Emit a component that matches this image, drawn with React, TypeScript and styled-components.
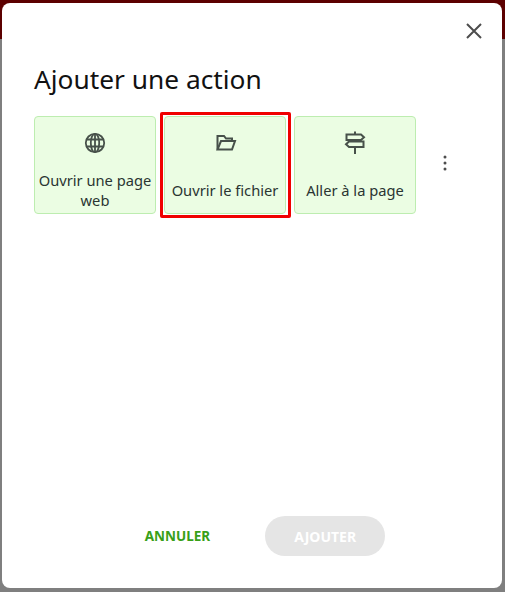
import React from "react";
import styled, { createGlobalStyle } from "styled-components";

const Global = createGlobalStyle`
  html, body { margin: 0; padding: 0; height: 100%; overflow: hidden; }
  #root { height: 100%; }
  * { box-sizing: border-box; }
`;

const Backdrop = styled.div`
  width: 505px;
  height: 592px;
  padding: 3px 3px 4px 2px;
  display: flex;
  background: linear-gradient(#5c0000 0, #5c0000 39px, #7f7f7f 39px, #7f7f7f 100%);
  font-family: "Noto Sans", "Open Sans", sans-serif;
`;

const Dialog = styled.div`
  flex: 1;
  display: flex;
  flex-direction: column;
  background: #fff;
  border-radius: 8px;
  padding: 0 32px 32px;
`;

const TopBar = styled.div`
  display: flex;
  justify-content: flex-end;
  height: 56px;
  margin-right: -16px;
  padding-top: 16px;
`;

const IconButton = styled.button`
  width: 24px;
  height: 24px;
  padding: 0;
  border: 0;
  background: none;
  color: #4d4d4d;
  display: flex;
  align-items: center;
  justify-content: center;
`;

const Title = styled.h2`
  margin: 0;
  font-size: 26.3px;
  line-height: 40px;
  font-weight: 400;
  color: #111;
`;

const Row = styled.div`
  margin-top: 17px;
  display: flex;
  gap: 8px;
  align-items: center;
`;

const Card = styled.div`
  position: relative;
  width: 122px;
  height: 98px;
  padding: 0 2px;
  background: #ebfde3;
  border: 1px solid #bdedb0;
  border-radius: 4px;
  display: flex;
  flex-direction: column;
  align-items: center;
  color: #47514a;
`;

const CardIcon = styled.div`
  height: 52px;
  flex: none;
  padding-top: 14px;
  display: flex;
  justify-content: center;
  line-height: 0;
`;

const CardLabel = styled.div`
  flex: 1;
  display: flex;
  align-items: center;
  text-align: center;
  font-size: 14.7px;
  line-height: 20px;
  color: #2a3532;
  margin-bottom: 2px;
`;

const Highlight = styled.div`
  position: absolute;
  left: -5px;
  top: -5px;
  right: -6px;
  bottom: -5px;
  border: 3px solid #f00000;
  border-radius: 2px;
  pointer-events: none;
`;

const MoreButton = styled(IconButton)`
  margin-left: 9px;
`;

const Footer = styled.div`
  margin-top: auto;
  padding-left: 26px;
  display: flex;
  justify-content: center;
  align-items: center;
  gap: 55px;
`;

const CancelButton = styled.button`
  border: 0;
  background: none;
  padding: 0;
  font: 700 13.5px "Noto Sans", sans-serif;
  color: #38a018;
`;

const AddButton = styled.button`
  width: 120px;
  height: 40px;
  border: 0;
  border-radius: 20px;
  background: #e5e5e5;
  color: #fff;
  font: 700 14px "Noto Sans", sans-serif;
`;

const Glyph = styled.svg.attrs({
  width: 24,
  height: 24,
  viewBox: "0 0 24 24",
  fill: "none",
  stroke: "currentColor",
})<{ $weight?: number }>`
  stroke-width: ${(p) => p.$weight ?? 1.8};
  display: block;
`;

const GlobeIcon = () => (
  <Glyph>
    <circle cx="12" cy="12" r="9.2" />
    <ellipse cx="12" cy="12" rx="4.2" ry="9.2" />
    <path d="M12 3v18M3.6 8.5h16.8M3.6 15.5h16.8" />
  </Glyph>
);

const FolderIcon = () => (
  <Glyph $weight={2}>
    <path d="M4.5 18.5V5H11l2 2.5h6V10" />
    <path d="M4.5 18.5H19L22 10H8z" />
  </Glyph>
);

const SignIcon = () => (
  <Glyph $weight={2}>
    <path d="M3.5 3.5h14.5l3 2.75-3 2.75H3.5z" />
    <path d="M20.5 10.5H6l-3 2.75L6 16h14.5z" />
    <path d="M12 0.5v3M12 16v7" />
  </Glyph>
);

const actions = [
  { label: "Ouvrir une page web", icon: <GlobeIcon /> },
  { label: "Ouvrir le fichier", icon: <FolderIcon />, boxed: true },
  { label: "Aller à la page", icon: <SignIcon /> },
];

export default function App() {
  return (
    <Backdrop>
      <Global />
      <Dialog>
        <TopBar>
          <IconButton aria-label="Fermer">
            <svg width="24" height="24" viewBox="0 0 24 24" fill="none" stroke="currentColor" strokeWidth="2">
              <path d="M5 5l14 14M19 5L5 19" />
            </svg>
          </IconButton>
        </TopBar>
        <Title>Ajouter une action</Title>
        <Row>
          {actions.map((a) => (
            <Card key={a.label}>
              <CardIcon>{a.icon}</CardIcon>
              <CardLabel>{a.label}</CardLabel>
              {a.boxed && <Highlight />}
            </Card>
          ))}
          <MoreButton aria-label="Plus">
            <svg width="24" height="24" viewBox="0 0 24 24" fill="currentColor">
              <circle cx="12" cy="4" r="1.5" />
              <circle cx="12" cy="10" r="1.5" />
              <circle cx="12" cy="16" r="1.5" />
            </svg>
          </MoreButton>
        </Row>
        <Footer>
          <CancelButton>ANNULER</CancelButton>
          <AddButton disabled>AJOUTER</AddButton>
        </Footer>
      </Dialog>
    </Backdrop>
  );
}
